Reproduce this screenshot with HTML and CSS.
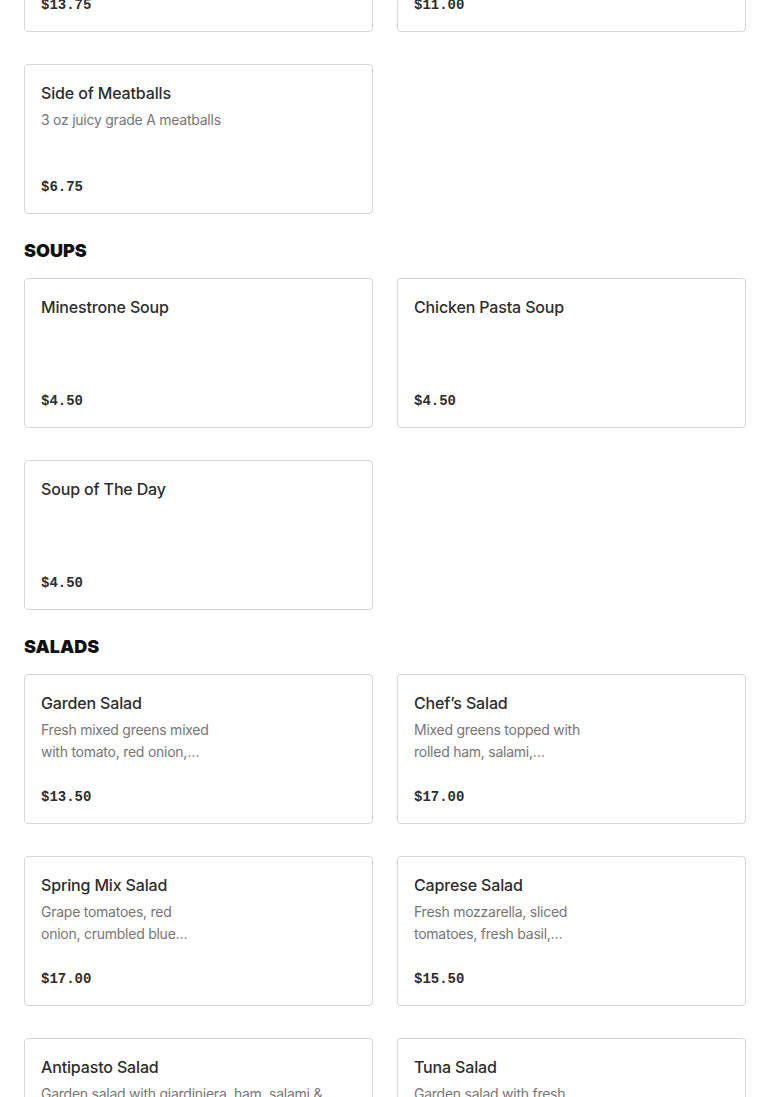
FILE: index.html
```html
<!DOCTYPE html>
<html lang="en">
<head>
<meta charset="utf-8">
<title>Menu</title>
<link rel="stylesheet" href="styles.css">
</head>
<body>
<main class="menu">
  <section class="section">
    <div class="grid">
      <article class="card">
        <h3 class="title">Spaghetti &amp; Meatballs</h3>
        <p class="desc">Spaghetti with marinara sauce and meatballs</p>
        <p class="price">$13.75</p>
      </article>
      <article class="card">
        <h3 class="title">Fettuccine Alfredo</h3>
        <p class="desc">Creamy parmesan sauce</p>
        <p class="price">$11.00</p>
      </article>
      <article class="card">
        <h3 class="title">Side of Meatballs</h3>
        <p class="desc wide">3 oz juicy grade A meatballs</p>
        <p class="price">$6.75</p>
      </article>
    </div>
  </section>

  <section class="section">
    <h2 class="heading">SOUPS</h2>
    <div class="grid">
      <article class="card">
        <h3 class="title">Minestrone Soup</h3>
        <p class="price">$4.50</p>
      </article>
      <article class="card">
        <h3 class="title">Chicken Pasta Soup</h3>
        <p class="price">$4.50</p>
      </article>
      <article class="card">
        <h3 class="title">Soup of The Day</h3>
        <p class="price">$4.50</p>
      </article>
    </div>
  </section>

  <section class="section">
    <h2 class="heading">SALADS</h2>
    <div class="grid">
      <article class="card">
        <h3 class="title">Garden Salad</h3>
        <p class="desc"><span class="line">Fresh mixed greens mixed</span><span class="line">with tomato, red onion,…</span></p>
        <p class="price">$13.50</p>
      </article>
      <article class="card">
        <h3 class="title">Chef’s Salad</h3>
        <p class="desc"><span class="line">Mixed greens topped with</span><span class="line">rolled ham, salami,…</span></p>
        <p class="price">$17.00</p>
      </article>
      <article class="card">
        <h3 class="title">Spring Mix Salad</h3>
        <p class="desc"><span class="line">Grape tomatoes, red</span><span class="line">onion, crumbled blue…</span></p>
        <p class="price">$17.00</p>
      </article>
      <article class="card">
        <h3 class="title">Caprese Salad</h3>
        <p class="desc"><span class="line">Fresh mozzarella, sliced</span><span class="line">tomatoes, fresh basil,…</span></p>
        <p class="price">$15.50</p>
      </article>
      <article class="card">
        <h3 class="title">Antipasto Salad</h3>
        <p class="desc wide"><span class="line">Garden salad with giardiniera, ham, salami &amp;</span><span class="line">provolone cheese…</span></p>
        <p class="price">$17.00</p>
      </article>
      <article class="card">
        <h3 class="title">Tuna Salad</h3>
        <p class="desc"><span class="line">Garden salad with fresh</span><span class="line">tuna salad scoop…</span></p>
        <p class="price">$16.50</p>
      </article>
    </div>
  </section>
</main>
</body>
</html>
```

FILE: styles.css
```css
html, body {
  margin: 0;
  padding: 0;
  background: #ffffff;
}

body {
  font-family: Inter, "Liberation Sans", Arial, sans-serif;
  color: #2d2d2d;
  overflow: hidden;
}

.menu {
  display: flex;
  flex-direction: column;
  gap: 24px;
  padding: 0 24px;
  margin-top: -118px;
}

.section {
  display: flex;
  flex-direction: column;
}

.heading {
  margin: 0 0 16px;
  font-family: Inter, "Liberation Sans", Arial, sans-serif;
  font-weight: 900;
  font-size: 18px;
  line-height: 24px;
  padding-top: 1px;
  margin-bottom: 15px;
  color: #111111;
  letter-spacing: 0;
}

.grid {
  display: grid;
  grid-template-columns: 1fr 1fr;
  column-gap: 24px;
  row-gap: 32px;
}

.card {
  box-sizing: border-box;
  height: 150px;
  border: 1px solid #d6d6d6;
  border-radius: 4px;
  padding: 17px 16px 15px;
  display: flex;
  flex-direction: column;
  background: #ffffff;
}

.title {
  margin: 0;
  font-size: 16px;
  line-height: 22px;
  font-weight: 500;
  letter-spacing: -0.15px;
  color: #2d2d2d;
}

.desc {
  margin: 5px 0 0;
  font-size: 14px;
  line-height: 22px;
  letter-spacing: -0.25px;
  color: #767676;
  max-width: 176px;
}

.desc.wide {
  max-width: none;
}

.line {
  display: block;
  white-space: nowrap;
}

.price {
  margin: auto 0 0;
  font-family: "Liberation Mono", "DejaVu Sans Mono", monospace;
  font-weight: 700;
  font-size: 14px;
  line-height: 22px;
  color: #2d2d2d;
}
```
